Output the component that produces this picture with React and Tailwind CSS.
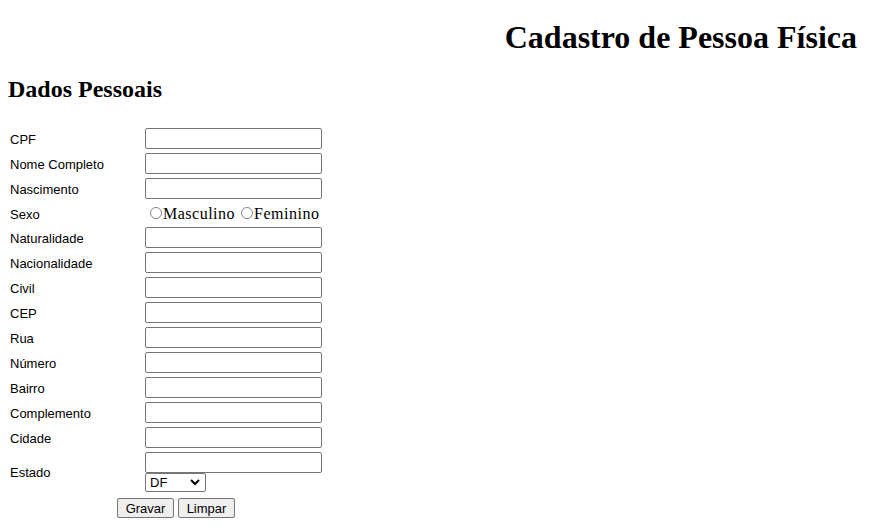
import React from "react";

const fields = [
  "CPF",
  "Nome Completo",
  "Nascimento",
  "SEXO",
  "Naturalidade",
  "Nacionalidade",
  "Civil",
  "CEP",
  "Rua",
  "Número",
  "Bairro",
  "Complemento",
  "Cidade",
];

function TextInput() {
  return (
    <div className="w-[177px] h-[21px] border border-[#767676] rounded-[2px] bg-white shrink-0" />
  );
}

function Radio() {
  return (
    <span className="block w-[12px] h-[12px] rounded-full border border-[#858585] bg-white shrink-0" />
  );
}

export default function App() {
  return (
    <div className="min-h-[528px] bg-white text-black font-['Liberation_Serif','Times_New_Roman',serif]">
      <h1 className="text-[32px] font-bold leading-[36px] text-right pr-[20px] pt-[19px]">
        Cadastro de Pessoa Física
      </h1>
      <h2 className="text-[24px] font-bold leading-[27px] mt-[21px] pl-[8px]">
        Dados Pessoais
      </h2>
      <div className="mt-[25px] pl-[10px] font-['Liberation_Sans',Arial,sans-serif] text-[13px]">
        {fields.map((f) =>
          f === "SEXO" ? (
            <div key={f} className="flex h-[24px]">
              <div className="w-[135px] pt-[4px] leading-[15px]">Sexo</div>
              <div className="flex items-start font-['Liberation_Serif','Times_New_Roman',serif] text-[16px] tracking-[0.5px]">
                <span className="ml-[5px] mt-[4px]">
                  <Radio />
                </span>
                <span className="ml-[1px] leading-[18px] pt-[2px]">Masculino</span>
                <span className="ml-[6px] mt-[4px]">
                  <Radio />
                </span>
                <span className="ml-[1px] leading-[18px] pt-[2px]">Feminino</span>
              </div>
            </div>
          ) : (
            <div key={f} className="flex h-[25px]">
              <div className="w-[135px] pt-[4px] leading-[15px]">{f}</div>
              <TextInput />
            </div>
          )
        )}
        <div className="flex">
          <div className="w-[135px] pt-[13px] leading-[15px]">Estado</div>
          <div className="flex flex-col">
            <TextInput />
            <div className="w-[61px] h-[19px] border border-[#767676] rounded-[2px] bg-white flex items-center justify-between pl-[4px] pr-[4px]">
              <span className="leading-[15px]">DF</span>
              <svg width="10" height="7" viewBox="0 0 10 7" className="mr-[1px]">
                <polyline
                  points="1,1 5,5 9,1"
                  fill="none"
                  stroke="#000"
                  strokeWidth="2"
                />
              </svg>
            </div>
          </div>
        </div>
        <div className="flex gap-[4px] mt-[6px] ml-[107px]">
          <button className="w-[57px] h-[20px] border border-[#767676] rounded-[2px] bg-[#efefef] leading-[15px] text-[13px]">
            Gravar
          </button>
          <button className="w-[57px] h-[20px] border border-[#767676] rounded-[2px] bg-[#efefef] leading-[15px] text-[13px]">
            Limpar
          </button>
        </div>
      </div>
    </div>
  );
}
